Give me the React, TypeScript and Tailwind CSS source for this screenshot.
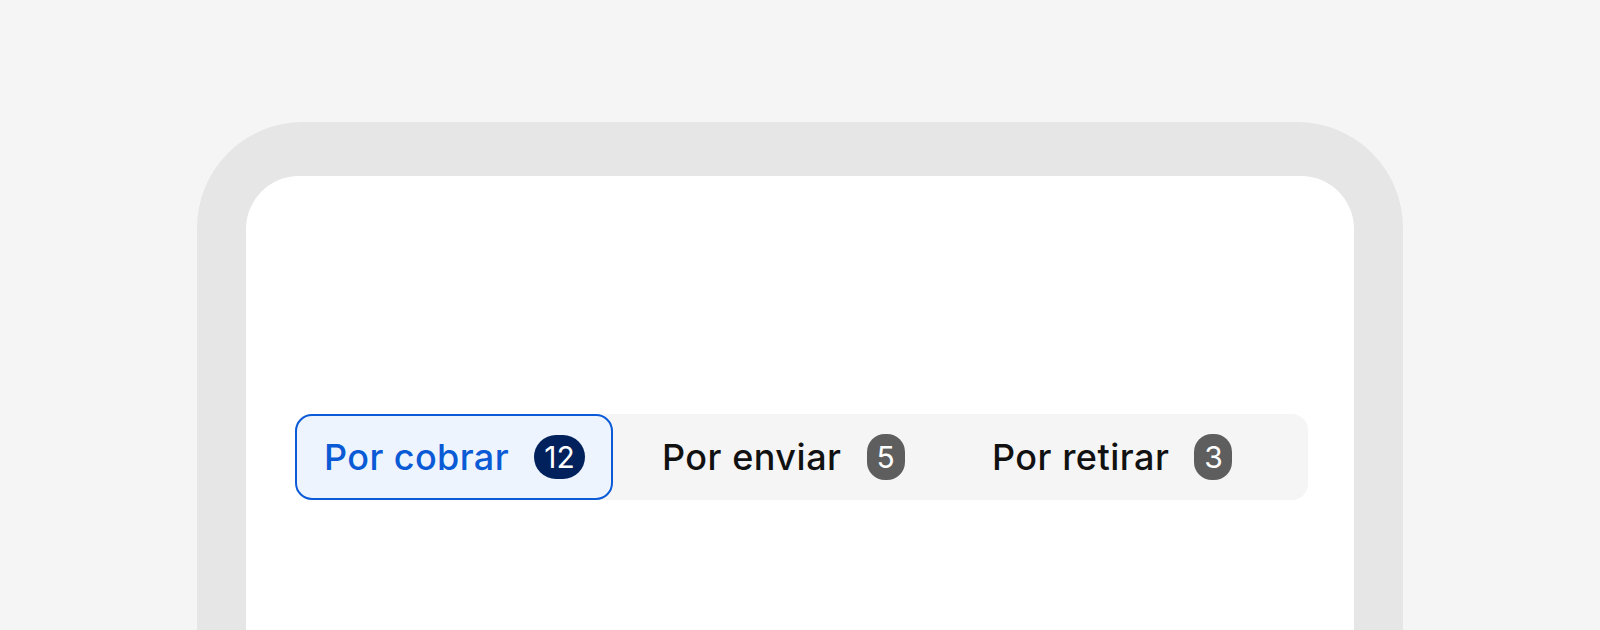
import React from 'react';

const tabs = [
  { label: 'Por cobrar', count: 12 },
  { label: 'Por enviar', count: 5 },
  { label: 'Por retirar', count: 3 },
];

export default function App() {
  return (
    <div className="h-[630px] w-[1600px] overflow-hidden bg-[#f5f5f5] font-['Inter',sans-serif]">
      <div className="mx-auto mt-[122px] w-[1206px] rounded-t-[106px] bg-[#e6e6e6] px-[49px] pt-[54px]">
        <div className="h-[500px] rounded-t-[53px] bg-white pl-[49px] pr-[46px] pt-[238px]">
          <div className="flex h-[86px] items-stretch rounded-[16px] bg-[#f5f5f5]">
            {/* active tab */}
            <div className="flex w-[318px] items-center rounded-[17px] border-2 border-[#0b5bd9] bg-[#edf4fe] pl-[27px]">
              <span className="text-[36px] font-medium leading-none tracking-[0.4px] text-[#0a5ad6]">{tabs[0].label}</span>
              <span className="ml-[25px] flex h-[44px] w-[51px] items-center justify-center rounded-full bg-[#00215c] text-[30px] leading-none text-white">
                {tabs[0].count}
              </span>
            </div>
            <div className="flex w-[330px] items-center pl-[49px]">
              <span className="text-[36px] font-medium leading-none tracking-[0.5px] text-[#111111]">{tabs[1].label}</span>
              <span className="ml-[25px] flex h-[46px] w-[38px] items-center justify-center rounded-[18px] bg-[#5e5e5e] text-[30px] leading-none text-white">
                {tabs[1].count}
              </span>
            </div>
            <div className="flex items-center pl-[49px]">
              <span className="text-[36px] font-medium leading-none tracking-[0.5px] text-[#111111]">{tabs[2].label}</span>
              <span className="ml-[25px] flex h-[46px] w-[38px] items-center justify-center rounded-[18px] bg-[#5e5e5e] text-[30px] leading-none text-white">
                {tabs[2].count}
              </span>
            </div>
          </div>
        </div>
      </div>
    </div>
  );
}
